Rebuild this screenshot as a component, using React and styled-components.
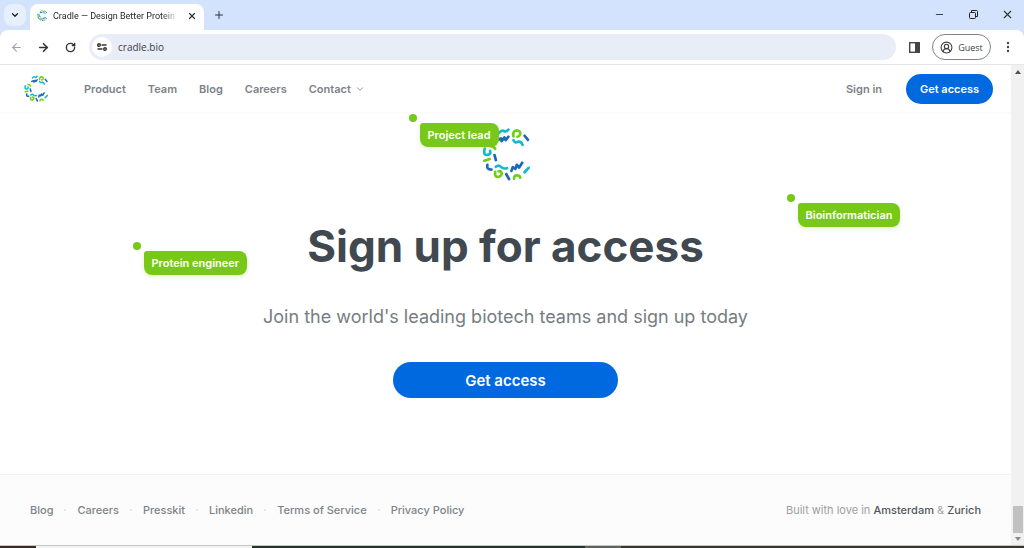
import styled, { createGlobalStyle } from "styled-components";
import {
  ArrowLeft,
  ArrowRight,
  ChevronDown,
  CircleUserRound,
  Minus,
  Plus,
  RotateCw,
  X,
} from "lucide-react";

const GlobalStyle = createGlobalStyle`
  * {
    box-sizing: border-box;
  }
  body {
    margin: 0;
    background: #ffffff;
    font-family: Inter, "Liberation Sans", sans-serif;
  }
  button, input {
    font: inherit;
    padding: 0;
    border: 0;
    background: none;
    color: inherit;
  }
  a {
    color: inherit;
    text-decoration: none;
  }
  svg {
    display: block;
    flex: none;
  }
`;

const Window = styled.div`
  display: flex;
  flex-direction: column;
  min-height: 100vh;
`;

const TabStrip = styled.div`
  display: flex;
  align-items: flex-start;
  height: 38px;
  margin-bottom: -8px;
  padding: 4px 7px 0 4px;
  background: #d3e3fd;
  color: #1f1f1f;
`;

const TabSearch = styled.button`
  display: grid;
  place-items: center;
  width: 22px;
  height: 22px;
  border-radius: 8px;
  background: #e7effd;
`;

const Tab = styled.div`
  display: flex;
  align-items: center;
  gap: 6px;
  width: 174px;
  height: 26px;
  margin-left: 4px;
  padding: 0 6px 3px 7px;
  border-radius: 8px 8px 0 0;
  background: #ffffff;
  font-family: Roboto, "Noto Sans", sans-serif;
  font-size: 9px;
`;

const TabTitle = styled.span`
  flex: 1;
  white-space: nowrap;
  mask-image: linear-gradient(to right, #000 85%, transparent);
`;

const IconButton = styled.button`
  display: grid;
  place-items: center;
  width: ${(props) => props.$size || 12}px;
  height: ${(props) => props.$size || 12}px;
  color: ${(props) => props.$color || "#333333"};
`;

const NewTab = styled(IconButton)`
  margin-left: 4px;
`;

const WindowControls = styled.div`
  display: flex;
  gap: 14px;
  margin-left: auto;
`;

const Toolbar = styled.div`
  display: flex;
  align-items: center;
  gap: 7px;
  height: 35px;
  padding: 0 6px;
  border-bottom: 1px solid #e4e6ea;
  border-radius: 8px 8px 0 0;
  background: #ffffff;
  color: #3c3f43;
  font-family: "Open Sans", "Noto Sans", sans-serif;
`;

const AddressBar = styled.label`
  display: flex;
  flex: 1;
  align-items: center;
  gap: 6px;
  height: 26px;
  margin-left: 2px;
  padding: 0 3px;
  border-radius: 13px;
  background: #e9edf7;
`;

const SiteInfo = styled.span`
  display: grid;
  place-items: center;
  width: 20px;
  height: 20px;
  border-radius: 50%;
  background: #ffffff;
`;

const AddressInput = styled.input`
  flex: 1;
  min-width: 0;
  color: #3c3f43;
  font-size: 10px;
  outline: none;
`;

const Profile = styled.button`
  display: flex;
  align-items: center;
  justify-content: center;
  gap: 5px;
  width: 59px;
  height: 26px;
  border: 1px solid #80848a;
  border-radius: 13px;
  font-size: 9px;
`;

const View = styled.div`
  display: flex;
  flex: 1;
`;

const Page = styled.div`
  display: flex;
  flex: 1;
  flex-direction: column;
  min-width: 0;
`;

const Header = styled.header`
  display: flex;
  align-items: center;
  justify-content: space-between;
  height: 48px;
  padding: 0 18px 0 24px;
  border-bottom: 1px solid #fafafa;
  color: #7c8388;
  font-size: 11px;
  font-weight: 600;
`;

const Nav = styled.nav`
  display: flex;
  align-items: center;
  gap: 22px;
`;

const Account = styled(Nav)`
  gap: 24px;
`;

const HomeLink = styled.a`
  margin-right: 14px;
`;

const MenuButton = styled.button`
  display: flex;
  align-items: center;
  gap: 4px;
`;

const PillButton = styled.button`
  width: ${(props) => (props.$large ? 225 : 87)}px;
  height: ${(props) => (props.$large ? 36 : 30)}px;
  border-radius: 18px;
  background: #0069e0;
  color: #ffffff;
  font-size: ${(props) => (props.$large ? 15 : 11)}px;
  font-weight: 600;
`;

const Hero = styled.main`
  position: relative;
  display: flex;
  flex: 1;
  flex-direction: column;
  align-items: center;
  padding: 14px 24px 76px;
  text-align: center;
`;

const Title = styled.h1`
  margin: 37px 0 29px;
  color: #404850;
  font-size: 44px;
  font-weight: 700;
  line-height: 56px;
`;

const Lead = styled.p`
  margin: 0 0 31px;
  color: #757d82;
  font-size: 18px;
  line-height: 28px;
`;

const Cursor = styled.div`
  position: absolute;
  top: ${(props) => props.$top}px;
  left: calc(50% + ${(props) => props.$shift}px);
  padding: 9px 0 0 11px;

  &::before {
    content: "";
    position: absolute;
    top: 0;
    left: 0;
    width: 8px;
    height: 8px;
    border-radius: 50%;
    background: #78c819;
  }
`;

const CursorLabel = styled.div`
  padding: 0 8px;
  border-radius: 3px 8px 8px 8px;
  background: #78c819;
  box-shadow: 0 2px 5px rgba(120, 200, 25, 0.2);
  color: #ffffff;
  font-size: 11px;
  font-weight: 600;
  line-height: 24px;
  white-space: nowrap;
`;

const Footer = styled.footer`
  display: flex;
  align-items: center;
  justify-content: space-between;
  height: 71px;
  padding: 0 30px;
  border-top: 1px solid #f1f2f2;
  background: #fcfcfc;
  color: #7c8388;
  font-size: 11px;
`;

const FooterLinks = styled.nav`
  display: flex;
  align-items: center;
  gap: 11px;
  font-weight: 500;
`;

const Dot = styled.span`
  width: 2px;
  height: 2px;
  border-radius: 50%;
  background: #e2e4e5;
`;

const Credits = styled.p`
  margin: 0;
  color: #9ba0a3;
`;

const City = styled.a`
  color: #50585e;
  font-weight: 500;
`;

const Scrollbar = styled.div`
  display: flex;
  flex-direction: column;
  align-items: center;
  width: 13px;
  padding: 5px 0 4px;
  background: #f1f1f1;
`;

const Thumb = styled.div`
  width: 10px;
  height: 27px;
  margin: auto 0 4px;
  background: #c1c1c1;
`;

const Desktop = styled.div`
  display: grid;
  grid-template-columns: 36px 216px 1fr 36px 403px;
  height: 3px;
  border-top: 1px solid #c4c6c4;
`;

const Strip = styled.div`
  background: ${(props) => props.$color};
`;

const green = "#6fcf12";
const cyan = "#12b9cf";
const blue = "#1d68b8";

const strokes = [
  [cyan, "M294 84Q302 74 309 78T322 74"],
  [blue, "M290 104L300 100L302 108L310 97L314 105L322 95"],
  [green, "M337 94Q334 77 347 76Q359 78 357 88Q355 94 349 95"],
  [blue, "M370 92L380 104"],
  [cyan, "M337 105Q342 115 349 110Q360 108 364 119"],
  [green, "M268 123Q278 122 283 131"],
  [cyan, "M252 130Q246 149 259 149Q271 147 268 137"],
  [blue, "M281 149L285 164"],
  [green, "M251 166L267 161"],
  [blue, "M260 178Q256 192 272 192"],
  [cyan, "M285 184Q293 177 300 184T318 188"],
  [green, "M283 199Q280 214 292 214Q304 211 302 201Q299 196 293 197"],
  [blue, "M316 206L324 220"],
  [blue, "M331 196L335 185L343 190L347 178L354 186L363 172"],
  [cyan, "M370 200L382 187"],
  [green, "M339 219Q338 209 348 209Q356 209 357 216"],
];

const CradleLogo = ({ width, height, weight = 8 }) => (
  <svg
    width={width}
    height={height}
    viewBox="244 67 142 158"
    fill="none"
    strokeWidth={weight}
    strokeLinecap="round"
    strokeLinejoin="round"
    aria-hidden="true"
  >
    {strokes.map(([color, d]) => (
      <path key={d} d={d} stroke={color} />
    ))}
  </svg>
);

const RestoreIcon = () => (
  <svg width="9" height="9" viewBox="0 0 9 9" fill="none" stroke="#222" strokeWidth="1">
    <rect x="0.5" y="2.5" width="6" height="6" rx="1" />
    <path d="M2.5 2V0.5H7.5Q8.5 0.5 8.5 1.5V6.5H7" />
  </svg>
);

const TuneIcon = () => (
  <svg width="10" height="8" viewBox="0 0 10 8" fill="none" stroke="#333" strokeWidth="1.4">
    <circle cx="2" cy="2" r="1.3" />
    <path d="M4.5 2H9.5M0.5 6H5.5" />
    <circle cx="8" cy="6" r="1.3" />
  </svg>
);

const SidePanelIcon = () => (
  <svg width="11" height="11" viewBox="0 0 11 11">
    <rect x="0.7" y="0.7" width="9.6" height="9.6" fill="none" stroke="#444" strokeWidth="1.4" />
    <rect x="6" y="1" width="4" height="9" fill="#444" />
  </svg>
);

const MoreIcon = () => (
  <svg width="4" height="12" viewBox="0 0 4 12" fill="#444">
    <circle cx="2" cy="2" r="1.2" />
    <circle cx="2" cy="6" r="1.2" />
    <circle cx="2" cy="10" r="1.2" />
  </svg>
);

const ScrollArrow = ({ down }) => (
  <svg width="6" height="4" viewBox="0 0 6 4" fill={down ? "#8a8a8a" : "#505050"}>
    <path d={down ? "M0 0H6L3 4Z" : "M0 4H6L3 0Z"} />
  </svg>
);

const cursors = [
  { name: "Project lead", top: 1, shift: -97 },
  { name: "Bioinformatician", top: 81, shift: 281 },
  { name: "Protein engineer", top: 129, shift: -373 },
];

const footerLinks = [
  "Blog",
  "Careers",
  "Presskit",
  "Linkedin",
  "Terms of Service",
  "Privacy Policy",
];

const Browser = () => (
  <>
    <TabStrip>
      <TabSearch aria-label="Search tabs">
        <ChevronDown size={10} strokeWidth={3} />
      </TabSearch>
      <Tab>
        <CradleLogo width={10} height={11} weight={13} />
        <TabTitle>Cradle — Design Better Protein</TabTitle>
        <IconButton aria-label="Close tab">
          <X size={10} strokeWidth={3} />
        </IconButton>
      </Tab>
      <NewTab $size={22} aria-label="New tab">
        <Plus size={12} strokeWidth={2} />
      </NewTab>
      <WindowControls>
        <IconButton $size={20} aria-label="Minimize">
          <Minus size={11} strokeWidth={2} />
        </IconButton>
        <IconButton $size={20} aria-label="Restore">
          <RestoreIcon />
        </IconButton>
        <IconButton $size={20} aria-label="Close">
          <X size={13} strokeWidth={2} />
        </IconButton>
      </WindowControls>
    </TabStrip>
    <Toolbar>
      <IconButton $size={20} $color="#a2a4a7" aria-label="Back">
        <ArrowLeft size={13} strokeWidth={2} />
      </IconButton>
      <IconButton $size={20} aria-label="Forward">
        <ArrowRight size={13} strokeWidth={3} />
      </IconButton>
      <IconButton $size={20} aria-label="Reload">
        <RotateCw size={11} strokeWidth={3} />
      </IconButton>
      <AddressBar>
        <SiteInfo>
          <TuneIcon />
        </SiteInfo>
        <AddressInput aria-label="Address" defaultValue="cradle.bio" />
      </AddressBar>
      <IconButton $size={22} aria-label="Side panel">
        <SidePanelIcon />
      </IconButton>
      <Profile>
        <CircleUserRound size={13} strokeWidth={2} />
        Guest
      </Profile>
      <IconButton $size={20} aria-label="More">
        <MoreIcon />
      </IconButton>
    </Toolbar>
  </>
);

const App = () => {
  return (
    <Window>
      <GlobalStyle />
      <Browser />
      <View>
        <Page>
          <Header>
            <Nav>
              <HomeLink href="#" aria-label="Cradle">
                <CradleLogo width={24} height={27} weight={9} />
              </HomeLink>
              <a href="#product">Product</a>
              <a href="#team">Team</a>
              <a href="#blog">Blog</a>
              <a href="#careers">Careers</a>
              <MenuButton>
                Contact
                <ChevronDown size={10} strokeWidth={2} />
              </MenuButton>
            </Nav>
            <Account>
              <a href="#signin">Sign in</a>
              <PillButton>Get access</PillButton>
            </Account>
          </Header>
          <Hero>
            <CradleLogo width={48} height={54} />
            <Title>Sign up for access</Title>
            <Lead>Join the world's leading biotech teams and sign up today</Lead>
            <PillButton $large>Get access</PillButton>
            {cursors.map((cursor) => (
              <Cursor key={cursor.name} $top={cursor.top} $shift={cursor.shift}>
                <CursorLabel>{cursor.name}</CursorLabel>
              </Cursor>
            ))}
          </Hero>
          <Footer>
            <FooterLinks>
              {footerLinks.map((link, i) => [
                i > 0 && <Dot key={"dot" + link} />,
                <a key={link} href="#footer">
                  {link}
                </a>,
              ])}
            </FooterLinks>
            <Credits>
              Built with love in <City href="#amsterdam">Amsterdam</City> &amp;{" "}
              <City href="#zurich">Zurich</City>
            </Credits>
          </Footer>
        </Page>
        <Scrollbar>
          <ScrollArrow />
          <Thumb />
          <ScrollArrow down />
        </Scrollbar>
      </View>
      <Desktop>
        <Strip $color="#3b2a20" />
        <Strip $color="#f2f2f2" />
        <Strip $color="#22352a" />
        <Strip $color="#60635a" />
        <Strip $color="#38372c" />
      </Desktop>
    </Window>
  );
};

export default App;
